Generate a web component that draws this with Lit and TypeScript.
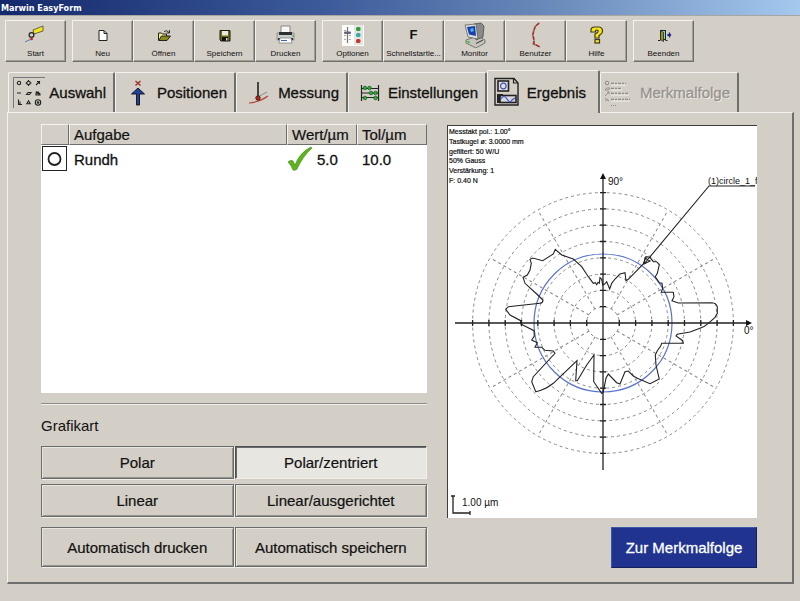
import { LitElement, html, svg, css, TemplateResult } from "lit";
import { customElement, property, state } from "lit/decorators.js";
import { classMap } from "lit/directives/class-map.js";

/* ---------- icons ---------- */

const toolIcons: Record<string, TemplateResult> = {
  start: html`<svg width="32" height="26" viewBox="0 0 32 26">
    <path d="M5 20l4-2 4-1" stroke="#4a7ac0" fill="none" />
    <path d="M13 8l10-4v5l-9 3z" fill="#f4e61c" stroke="#333" stroke-width=".7" />
    <circle cx="11.500" cy="13" r="2.400" fill="#d3cec6" stroke="#222" stroke-width="1.200" />
    <circle cx="11.500" cy="17" r="1.300" fill="#d22" />
  </svg>`,
  new: html`<svg width="32" height="26" viewBox="0 0 32 26">
    <path d="M12 8.500h5l3 3v7h-8z" fill="#fff" stroke="#222" />
    <path d="M17 8.500v3h3" fill="none" stroke="#222" />
  </svg>`,
  open: html`<svg width="32" height="26" viewBox="0 0 32 26">
    <path d="M10.500 18v-7h3l1 1h4v2" fill="#f4ee8c" stroke="#222" />
    <path d="M10.500 18.500l3-4.500h9l-3.500 4.500z" fill="#8a8a1a" stroke="#222" />
    <path d="M16 9.500q3-2 5 1M21.500 8v3h-3" fill="none" stroke="#222" stroke-width=".9" />
  </svg>`,
  save: html`<svg width="32" height="26" viewBox="0 0 32 26">
    <path d="M11 8.500h10v10.500h-9l-1-1z" fill="#6c6c16" stroke="#1c1c10" />
    <rect x="13" y="9" width="6" height="4.500" fill="#e8e8e0" />
    <rect x="13" y="15" width="6" height="4" fill="#111" />
    <rect x="17" y="16" width="1.500" height="2.500" fill="#ddd" />
  </svg>`,
  print: html`<svg width="32" height="26" viewBox="0 0 32 26">
    <path d="M11 11V4h9v7" fill="#f7f7f7" stroke="#888" />
    <path d="M7 11h17v7H7z" fill="#c9cccc" stroke="#777" stroke-width=".7" />
    <path d="M9 10h13v3H9zM8 16h15v2H8z" fill="#2c3030" />
    <path d="M10 16h11l1 5H9z" fill="#fafafa" stroke="#777" stroke-width=".7" />
    <path d="M11 18.500h6" stroke="#3a63b0" />
    <path d="M22 14h2" stroke="#3a3" />
  </svg>`,
  options: html`<svg width="32" height="26" viewBox="0 0 32 26">
    <rect x="5" y="3" width="22" height="21" fill="#fbfbf9" />
    <rect x="17" y="3" width="9" height="20" fill="#e4e4e2" />
    <path d="M10.500 5v16" stroke="#777" stroke-width="1.200" />
    <path d="M7 8.500h2M7 13.500h2M7 17.500h2M12 13.500h2M12 17.500h2" stroke="#aaa" />
    <rect x="7" y="9.500" width="7" height="2.500" rx="1" fill="#667" />
    <rect x="19" y="5" width="4.500" height="4" rx="1.500" fill="#2f9a3a" />
    <rect x="19" y="11" width="4.500" height="4" rx="1.500" fill="#3aa8a4" />
    <rect x="19" y="17" width="4.500" height="4" rx="1.500" fill="#c33a32" />
  </svg>`,
  quick: html`<span class="letter">F</span>`,
  monitor: html`<svg width="32" height="26" viewBox="0 0 32 26">
    <path d="M7 18l12-4 7 4v3l-9 5-10-5z" fill="#c4c4bc" stroke="#555" stroke-width=".7" />
    <path d="M15 2l7-1 3 3-1 11-7 3z" fill="#8a8a86" stroke="#444" stroke-width=".7" />
    <path d="M6 3l11-1 2 15-10-2z" fill="#dcdcd4" stroke="#555" stroke-width=".7" />
    <path d="M8 5l8-1 1 10-7-1.500z" fill="#1640b0" />
    <path d="M11 7l3-1 1 3-3 1z" fill="#48b4ec" />
    <path d="M17 21.500l7-3.500" stroke="#333" />
    <path d="M8.500 19.500l2 1" stroke="#1c1" stroke-width="1.500" />
  </svg>`,
  user: html`<svg width="32" height="26" viewBox="0 0 32 26">
    <path d="M19.500 1l-4 3-2 5-1 4 1.500 6-1 3 3 1 4 2" fill="none" stroke="#8f9090" stroke-width="1.500" />
    <path d="M19 1l-4 4-2 7 1 6v4l6 3" fill="none" stroke="#b02a22" stroke-width="1.400" stroke-dasharray="4 1" />
  </svg>`,
  help: html`<svg width="32" height="26" viewBox="0 0 32 26">
    <path d="M10 10V7.500Q10.500 5 13.500 5h4.500q3.500.500 3.500 4 0 2.500-2 3.500l-1.500 1v2.500h-4v-4l2.500-1.500q1-1 .500-2-1.500-1-2.500 0V10z" fill="#f5e51b" stroke="#3c3a12" stroke-width="1.200" />
    <rect x="14" y="17.500" width="4.500" height="3.500" fill="#f5e51b" stroke="#3c3a12" stroke-width="1.200" />
  </svg>`,
  quit: html`<svg width="32" height="26" viewBox="0 0 32 26">
    <path d="M10 18.500h2.500M17.500 18.500h2" stroke="#222" />
    <rect x="12.500" y="8.500" width="5" height="9" fill="#7fd0dc" stroke="#222" />
    <path d="M12.500 8.500l3 2v9l-3-2z" fill="#98941a" stroke="#222" stroke-width=".8" />
    <path d="M19 13h3M21.500 10.500v5" stroke="#26208a" stroke-width="1.200" />
    <path d="M19.500 13l2-2 2 2-2 2z" fill="#26208a" />
  </svg>`,
};

const tabIcons: Record<string, TemplateResult> = {
  select: html`<svg width="32" height="32" viewBox="0 0 32 32" fill="none" stroke="#222" stroke-width="1.100">
    <path d="M.500 31V.500H32" stroke="#77777a" stroke-width="1" />
    <circle cx="6" cy="6" r="1.700" />
    <circle cx="15.500" cy="6" r="1.700" />
    <path d="M15.500 3v1.500M15.500 7.500v1.500M12.500 6h1.500M17 6h1.500M23 8l3-3M24 4.500h2.500V7" />
    <path d="M4 16h4M13.500 17.500l1.500-2h3l-1.500 2zM23 14.500l3 3M23 18v-2l2-1 2 2v1z" />
    <path d="M5.500 22.500v5H9M7 24.500v3M13.800 26.800l1.700-3 1.700 3z" />
    <circle cx="25" cy="25.500" r="2.700" /><circle cx="25" cy="25.500" r=".8" />
  </svg>`,
  position: html`<svg width="14" height="28" viewBox="0 0 14 28">
    <path d="M4.500 2l5 4.500M9.500 2l-5 4.500" stroke="#9c2a22" stroke-width="1.200" />
    <path d="M7 9l6.500 6H8.500v11H5.500V15H.500z" fill="#20409c" stroke="#111" stroke-width=".9" />
  </svg>`,
  measure: html`<svg width="22" height="24" viewBox="0 0 22 24">
    <path d="M1 22q11-1 19-7" fill="none" stroke="#b5443c" stroke-width="1.200" />
    <path d="M10 16q5-3 9-5" stroke="#888" fill="none" />
    <path d="M10 1v14" stroke="#222" stroke-width="1.600" />
    <circle cx="10" cy="17" r="2.200" fill="#c5201c" stroke="#221" stroke-width=".9" />
  </svg>`,
  settings: html`<svg width="20" height="18" viewBox="0 0 20 18">
    <path d="M1.500 1v16M18.500 1v16M1 4.500h18M1 9h18M1 13.500h18" stroke="#222" stroke-width="1.200" />
    <g fill="#2cae35" stroke="#152" stroke-width=".7">
      <circle cx="5" cy="4" r="1.800" /><circle cx="9.500" cy="4" r="1.800" />
      <circle cx="11" cy="9" r="1.800" /><circle cx="15.500" cy="9" r="1.800" />
      <circle cx="5" cy="14" r="1.800" /><circle cx="15.500" cy="14" r="1.800" />
    </g>
  </svg>`,
  result: html`<svg width="25" height="30" viewBox="0 0 25 30">
    <path d="M1 1.500h19l4 4.500v22H1z" fill="#d3cec6" stroke="#222" stroke-width="1.400" />
    <path d="M19.500 1.500V6H24" fill="none" stroke="#222" stroke-width="1.200" />
    <rect x="4" y="4" width="10.500" height="10" fill="#e2dfda" stroke="#222" stroke-width="1.600" />
    <circle cx="9.300" cy="9" r="2.800" fill="none" stroke="#3c56c4" stroke-width="1.200" />
    <rect x="3" y="17" width="6" height="9" fill="#222" />
    <rect x="6" y="18.500" width="16" height="7" fill="#d9d8dc" stroke="#222" stroke-width="1.600" />
    <path d="M7 22q3-5 6 0t5 1l3-2" fill="none" stroke="#3c56c4" stroke-width="1.200" />
  </svg>`,
  sequence: html`<svg width="28" height="30" viewBox="0 0 28 30" fill="none" stroke="#8e8c88">
    <circle cx="3" cy="5" r="1.800" />
    <path d="M1 12l1.500-2H6l-1.500 2zM1 18l4-4M3 14h2v2M1 20l4 3M1 23q2-3 4 0" stroke-width=".9" />
    <path d="M7 5.500h15M7 10.500h11M7 15.500h18M7 21.500h19" stroke-width="1.500" stroke-dasharray="3 1 2 1" />
    <path d="M7 7h15M7 12h11M7 17h18M7 23h19" stroke="#f3f1ec" />
    <path d="M7 27.500h6" stroke-dasharray="1 1" />
  </svg>`,
};

const tools = [
  [["start", "Start"]],
  [["new", "Neu"], ["open", "Öffnen"], ["save", "Speichern"], ["print", "Drucken"]],
  [["options", "Optionen"], ["quick", "Schnellstartle..."], ["monitor", "Monitor"], ["user", "Benutzer"], ["help", "Hilfe"]],
  [["quit", "Beenden"]],
];

const tabs = [
  ["select", "Auswahl"],
  ["position", "Positionen"],
  ["measure", "Messung"],
  ["settings", "Einstellungen"],
  ["result", "Ergebnis"],
  ["sequence", "Merkmalfolge"],
];

/* ---------- polar plot ---------- */

const RING = 16.3;
const rings = [1, 2, 3, 4, 5, 6, 7, 8];
const rays = [30, 60, 120, 150, 210, 240, 300, 330];

/* measured profile, relative to the plot centre */
const profile =
  "M-.3-38L1.700-39 3.700-41.300 6.700-34 8.700-39.700 12-44 17-49 22-50.300 23-42.300 25.300-43.700 40.300-59 43-66.300 47-65.700 50.300-61.300 53.700-61.300 56.300-58 54.300-49.700 52.300-46.300 56.300-40.300 59-39.700 59.700-34.700 58.300-30.700 70.300-30.700 71-26.300 69-22.300 75.300-20 109-20.300Q113-20 114.300-16.300V-9.700L112-5.700 105.300.3Q101 4 97 5.300L87 9 74.300 11.300 73 13 79.700 17.700 80.300 20.300 58.700 20.300 57.700 23 54.300 27.700 52.300 32 53 42 55.300 52 56.300 56 47 60.700 34.300 55.300 30.300 53 25.300 48 22 48.700 17 61 13.700 59.700 5.300 51 3 55.300.3 68.700-1.300 70.300-6.300 63-9.300 58.700-9 32-16.300 42-25.700 57.700-27.300 57.700-26 37.700-49.700 60.300Q-58 67-67.300 68.700L-71.300 58.700-69.700 53.700-48 30.300-49.700 28-58 27.300-61.300 24.300-68 24.300-65.700 19.700-71.300 17-68.700 13-69 7.700-82.300 1-82.300-2.300-93-8-97.300-13.700-94.700-16.300-63-19.700Q-60-20-60-23L-66.300-29-78-39.700-80-45.700-75.700-48-73-53-71.700-59.700-73-63.700-70.300-65-60.300-62.300-49.700-69-47.700-73.700-41.300-68-29.700-64-21.300-56.300-14.700-46.300-9.700-39.700-7.700-40.300-6.300-38.300-5-40.700-3.700-39.700-3-45.300-1.300-43.700Z";

@customElement("polar-plot")
export class PolarPlot extends LitElement {
  static styles = css`
    :host { display: block; }
    .plot {
      display: block;
      width: 100%;
      box-sizing: border-box;
      background: #fff;
      font-family: "Liberation Sans", Arial, sans-serif;
      fill: #111;
    }
    .info { font-size: 7px; stroke: #111; stroke-width: 0.2; }
    .label { font-size: 10px; }
    .tag { font-size: 9px; }
    .grid { fill: none; stroke: #8a8a8a; stroke-dasharray: 3 3; }
    .axis { fill: none; stroke: #222; stroke-width: 1.3; }
    .mean { fill: none; stroke: #5a74cc; stroke-width: 1.2; }
    .profile { fill: none; stroke: #222; stroke-width: 1.1; }
    .frame { fill: none; stroke: #3c3c3c; stroke-width: 2; }
  `;

  render() {
    const info = ["Messtakt pol.: 1.00°", "Tastkugel ø: 3.0000 mm", "gefiltert: 50 W/U", "50% Gauss", "Verstärkung: 1", "F: 0.40 N"];
    return html`<svg class="plot" viewBox="0 0 310 393" role="img" aria-label="Polar">
      <path class="frame" d="M0 393V0H310" />
      ${info.map((t, i) => svg`<text class="info" x="2" y=${9 + i * 10 - Math.floor(i / 3)}>${t}</text>`)}
      <g transform="translate(156 198)">
        ${rings.map((n) => svg`<circle class="grid" r=${n * RING} />`)}
        ${rays.map((a) => svg`<path class="grid" d="M16 0H130" transform="rotate(${a})" />`)}
        <circle class="mean" r="69" />
        <path class="axis" d="M-148 0H146M0 147V-147" />
        <path d="M149 0l-6-3v6zM0-150l-3 6h6z" />
        ${rings.map((n) => svg`<path class="axis" d="M${n * RING}-3v6M${-n * RING}-3v6M-3 ${n * RING}h6M-3 ${-n * RING}h6" />`)}
        <path class="profile" d=${profile} />
        <path class="profile" d="M41-59L106-137H152M41-59l1-6 5 3z" />
        <text class="label" x="5" y="-138">90°</text>
        <text class="label" x="141" y="11">0°</text>
        <text class="tag" x="105" y="-139">(1)circle_1_f</text>
      </g>
      <path class="axis" d="M4 371h4M6 371v17h17M23 386v4" />
      <text class="label" x="15" y="381">1.00 µm</text>
    </svg>`;
  }
}

@customElement("tool-button")
export class ToolButton extends LitElement {
  @property() icon = "";
  @property() label = "";

  static styles = css`
    :host { display: block; width: 61px; }
    .tool {
      display: flex;
      flex-direction: column;
      align-items: center;
      width: 100%;
      height: 42px;
      padding: 0;
      background: #d3cec6;
      border: 1px solid;
      border-color: #f4f2ee #6e6e6c #6e6e6c #f4f2ee;
      box-shadow: inset -1px -1px #a19d97;
      color: #111;
      font-family: "Liberation Sans", Arial, sans-serif;
      font-size: 8px;
      line-height: 12px;
      white-space: nowrap;
    }
    .pic { display: grid; place-items: center; height: 27px; }
    .letter { font: bold 13px/26px "Liberation Sans", sans-serif; }
  `;

  render() {
    return html`<button class="tool" type="button">
      <span class="pic">${toolIcons[this.icon]}</span><span>${this.label}</span>
    </button>`;
  }
}

@customElement("app-root")
export class AppRoot extends LitElement {
  @state() private tab = "result";
  @state() private kind = "Polar/zentriert";

  static styles = css`
    :host {
      display: block;
      min-height: 100vh;
      background: #d3cec6;
      color: #111;
      font-family: "Liberation Sans", Arial, sans-serif;
      font-size: 15px;
    }
    .title {
      height: 16px;
      margin: 0;
      padding-left: 1px;
      background: linear-gradient(90deg, #14296c, #3c5a9a 40%, #6c8cbc 70%, #a4c8ee);
      color: #fff;
      font: bold 9px/16px "DejaVu Sans Condensed", "DejaVu Sans", sans-serif;
      border-bottom: 1px solid #a9a6a0;
      box-sizing: border-box;
    }
    .toolbar { display: flex; gap: 6px; padding: 4px 5px 0; }
    .group { display: flex; }
    .tabs {
      display: grid;
      grid-template-columns: 107px 121px 112px 139px 113px 139px;
      align-items: end;
      height: 42px;
      margin: 8px 8px 0;
    }
    .tab {
      display: flex;
      align-items: center;
      justify-content: flex-end;
      gap: 8px;
      height: 40px;
      padding: 0 7px 0 0;
      background: none;
      border: 0 solid;
      border-color: #f4f2ee #6e6e6c #6e6e6c #f4f2ee;
      border-width: 1px 2px 0 1px;
      border-radius: 2px 2px 0 0;
      color: #111;
      font: inherit;
      -webkit-text-stroke: 0.3px;
    }
    .select { gap: 4px; }
    .position { gap: 12px; }
    .current {
      position: relative;
      height: 43px;
      margin-bottom: -1px;
      padding-right: 12px;
      background: #d3cec6;
    }
    .tab:disabled { color: #96938e; text-shadow: 1px 1px #f3f1ec; }
    .panel {
      display: grid;
      grid-template-columns: 386fr 310fr;
      column-gap: 20px;
      margin: 0 6px 0 7px;
      padding: 11px 35px 14px 33px;
      border: 1px solid;
      border-color: #f4f2ee #6e6e6c #6e6e6c #f4f2ee;
      border-right-width: 2px;
      border-bottom-width: 2px;
    }
    .list { height: 269px; background: #fff; }
    table { width: 100%; table-layout: fixed; border-collapse: separate; border-spacing: 0; }
    .c-icon { width: 28px; }
    .c-value { width: 70px; }
    th {
      height: 19px;
      padding: 0 4px;
      background: #d3cec6;
      border: 1px solid;
      border-color: #f4f2ee #6e6e6c #6e6e6c #f4f2ee;
      font-weight: normal;
      text-align: left;
      line-height: 19px;
      -webkit-text-stroke: 0.2px;
    }
    td { height: 28px; padding: 0 5px; white-space: nowrap; -webkit-text-stroke: 0.3px; }
    .cell-icon { padding: 0 1px; }
    .cell-icon svg, .value svg { display: block; }
    .value { display: flex; align-items: center; gap: 4px; }
    .cell-value { padding: 0; }
    .rule { height: 0; margin: 10px 0 12px; border: 0; border-top: 1px solid #8e8b88; border-bottom: 1px solid #f1efea; }
    fieldset { margin: 0; padding: 0; border: 0; min-width: 0; }
    legend { padding: 0; height: 29px; line-height: 18px; }
    .choices { display: grid; grid-template-columns: 1fr 1fr; gap: 5px 1px; }
    .actions { display: grid; grid-template-columns: 1fr 1fr; gap: 1px; margin-top: 10px; }
    .btn {
      height: 33px;
      padding: 0;
      background: #d3cec6;
      border: 1px solid #6a6c6c;
      box-shadow: inset 1px 1px #e9e6e0, inset -1px -1px #96948f, 1px 1px #f1efea;
      color: #111;
      font: inherit;
      -webkit-text-stroke: 0.2px;
    }
    .tall { height: 40px; }
    .pressed {
      background: #e8e6e1;
      border-color: #4c5050 #f1efea #f1efea #4c5050;
      box-shadow: inset 1px 1px #6a6c6c;
    }
    .right { display: flex; flex-direction: column; }
    polar-plot { margin-top: 1px; }
    .next {
      align-self: flex-end;
      width: 146px;
      height: 41px;
      margin-top: 9px;
      padding: 0;
      background: #20348f;
      border: 1px solid;
      border-color: #3c56a8 #141f5c #141f5c #3c56a8;
      color: #fff;
      font: inherit;
      -webkit-text-stroke: 0.3px;
    }
  `;

  render() {
    return html`
      <h1 class="title">Marwin EasyForm</h1>
      <div class="toolbar" role="toolbar">
        ${tools.map((g) => html`<div class="group">
          ${g.map(([icon, label]) => html`<tool-button icon=${icon} label=${label}></tool-button>`)}
        </div>`)}
      </div>
      <div class="tabs" role="tablist">
        ${tabs.map(([id, label]) => html`<button
          type="button"
          role="tab"
          aria-selected=${this.tab === id}
          ?disabled=${id === "sequence"}
          class=${classMap({ tab: true, [id]: true, current: this.tab === id })}
          @click=${() => (this.tab = id)}
        >${tabIcons[id]}<span>${label}</span></button>`)}
      </div>
      <main class="panel">
        <section>
          <div class="list">
            <table>
              <colgroup><col class="c-icon" /><col /><col class="c-value" /><col class="c-value" /></colgroup>
              <thead><tr><th></th><th>Aufgabe</th><th>Wert/µm</th><th>Tol/µm</th></tr></thead>
              <tbody><tr>
                <td class="cell-icon"><svg width="26" height="26" viewBox="0 0 26 26" fill="none" stroke="#222">
                  <rect x=".5" y=".5" width="24" height="24" /><circle cx="12.500" cy="13" r="6" stroke-width="1.800" /></svg></td>
                <td>Rundh</td>
                <td class="cell-value"><div class="value"><svg width="26" height="26" viewBox="0 0 26 26">
                  <path d="M1 16q3-3 5-1l2 4Q13 6 24 1l1 1Q16 10 10 23q-2 2-4 1Q4 19 1 16z" fill="#5cb31c" stroke="#3d8c14" stroke-width=".6" /></svg>5.0</div></td>
                <td>10.0</td>
              </tr></tbody>
            </table>
          </div>
          <hr class="rule" />
          <fieldset>
            <legend>Grafikart</legend>
            <div class="choices">
              ${["Polar", "Polar/zentriert", "Linear", "Linear/ausgerichtet"].map((k) => html`<button
                type="button"
                aria-pressed=${this.kind === k}
                class=${classMap({ btn: true, pressed: this.kind === k })}
                @click=${() => (this.kind = k)}
              >${k}</button>`)}
            </div>
          </fieldset>
          <div class="actions">
            <button type="button" class="btn tall">Automatisch drucken</button>
            <button type="button" class="btn tall">Automatisch speichern</button>
          </div>
        </section>
        <section class="right">
          <polar-plot></polar-plot>
          <button type="button" class="next">Zur Merkmalfolge</button>
        </section>
      </main>
    `;
  }
}
